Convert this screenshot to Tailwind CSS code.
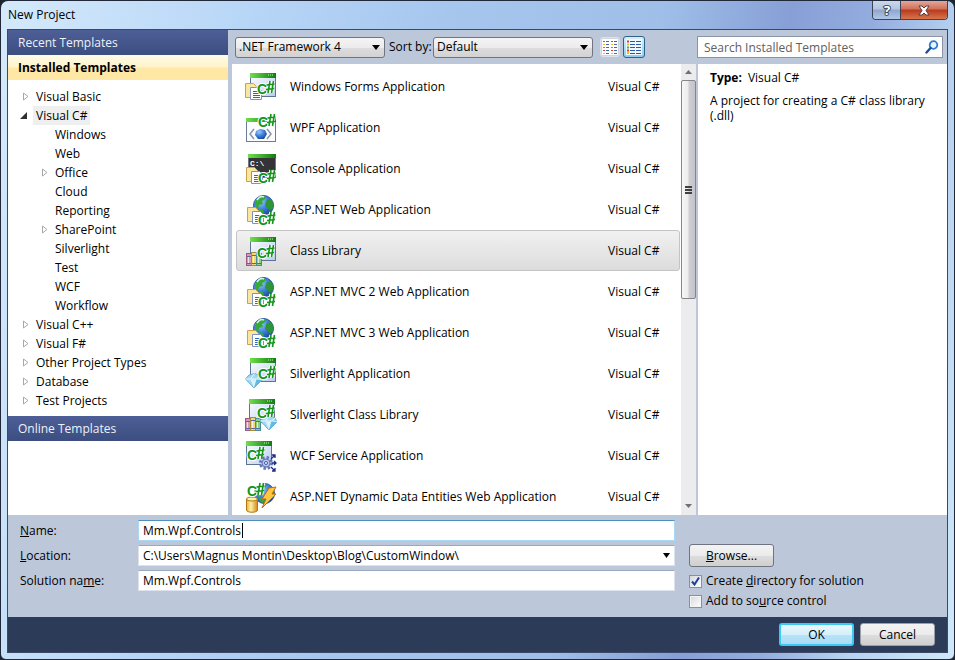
<!DOCTYPE html>
<html lang="en">
  <head>
    <meta charset="UTF-8" />
    <meta name="viewport" content="width=device-width, initial-scale=1.0" />
    <title>New Project</title>
    <script src="https://cdn.jsdelivr.net/npm/@tailwindcss/browser@4"></script>
  </head>
  <body class="h-screen overflow-hidden bg-[#1c2430] font-['Open_Sans',sans-serif] text-[12px] leading-4 text-black">
    <!-- Shared icon parts -->
    <svg class="absolute h-0 w-0" xmlns="http://www.w3.org/2000/svg">
      <defs>
        <linearGradient id="pane" x1="0" y1="0" x2="1" y2="1">
          <stop offset="0" stop-color="#ffffff" />
          <stop offset="1" stop-color="#b9cdf0" />
        </linearGradient>
        <linearGradient id="bar" x1="0" y1="0" x2="1" y2="0">
          <stop offset="0" stop-color="#6fe04a" />
          <stop offset="1" stop-color="#117a12" />
        </linearGradient>
        <radialGradient id="sea" cx="0.35" cy="0.3" r="0.8">
          <stop offset="0" stop-color="#9cc8ff" />
          <stop offset="0.5" stop-color="#3b7fd6" />
          <stop offset="1" stop-color="#143f8c" />
        </radialGradient>
        <linearGradient id="gold" x1="0" y1="0" x2="1" y2="0">
          <stop offset="0" stop-color="#f0b030" />
          <stop offset="0.4" stop-color="#fff0a8" />
          <stop offset="1" stop-color="#d08a10" />
        </linearGradient>
        <g id="window">
          <rect x="0.5" y="0.5" width="25" height="23" fill="url(#pane)" stroke="#5c7396" />
          <rect x="0" y="0" width="26" height="5" fill="url(#bar)" />
          <path d="M18 2h1M20 2h1M22 2h1" stroke="#c8f8b0" />
        </g>
        <g id="docs">
          <path d="M0.5 0.5h8l3 3v11h-11z" fill="#fbe6a0" stroke="#c9a24a" />
          <path d="M5.5 4.5h8l3 3v9h-11z" fill="#ffffff" stroke="#7d93c4" />
          <path d="M8 8.500h5M8 10.500h7M8 12.500h7M8 14.500h7" stroke="#2f62c0" />
        </g>
        <g id="sharp">
          <text x="0" y="12" font-family="Liberation Sans" font-size="14" font-weight="bold" fill="#15941a" stroke="#ffffff" stroke-width="2" paint-order="stroke">C</text>
          <path d="M11 11l2-12M14.500 11l2-12M9.500 3l8-1M9 7.500l8-1" stroke="#ffffff" stroke-width="3.500" fill="none" />
          <path d="M11 11l2-12M14.500 11l2-12M9.500 3l8-1M9 7.500l8-1" stroke="#15941a" stroke-width="1.600" fill="none" />
        </g>
        <g id="globe">
          <circle cx="10.500" cy="10.500" r="10" fill="url(#sea)" stroke="#24539c" />
          <path d="M3 5C6 1 10 0 13 2l-2 3-2 1 1 3-4 1-1 4C2 12 1 9 3 5z" fill="#36a83c" />
          <path d="M14 5l4-1c2 3 3 6 2 9l-3 3-2-3-3-2 1-4z" fill="#2c9535" />
          <path d="M6 14l4 1 1 4-3 1-3-3z" fill="#36a83c" />
          <path d="M4 5c2-3 5-4 7-3" stroke="#d8f4e0" stroke-width="1.500" fill="none" />
        </g>
        <g id="books">
          <rect x="0.500" y="1.500" width="5" height="12" fill="#d49ab4" stroke="#9c5a80" />
          <rect x="5.500" y="0.500" width="5" height="13" fill="#f0d878" stroke="#a88a38" />
          <rect x="10.500" y="1.500" width="5" height="12" fill="#8fcf80" stroke="#4a8c98" />
          <path d="M1 4.500h4M1 11.500h4M6 3.500h4M6 11.500h4M11 4.500h4M11 11.500h4" stroke="#5868a0" />
          <path d="M2.500 5v6M7.500 4v7M12.500 5v6" stroke="#ffffff" stroke-opacity="0.700" />
        </g>
        <g id="gem">
          <path d="M0.500 6L4 2l6-1.500L15 3l2 4-8 8z" fill="#9fd9f3" stroke="#5fb0da" />
          <path d="M0.500 6l5 0 4-5.500M5.500 6l6 0L17 7M11.500 6L15 3" stroke="#eefaff" fill="none" />
          <path d="M5.500 6.500L9 15l2.500-8.500z" fill="#d9f3fd" />
          <path d="M11.500 6.500L17 7l-8 8z" fill="#62b9e6" />
        </g>
      </defs>
    </svg>

    <div class="flex h-full flex-col rounded-t-lg rounded-b-md border border-[#20283a] bg-[linear-gradient(100deg,#d4e9fb_0%,#b9d7f7_22%,#a6c6ee_42%,#9fbfe9_62%,#879fd6_74%,#94addf_82%,#b7d2f0_90%,#cfe8fb_100%)] px-[6px] pb-[6px]">
      <!-- Title bar -->
      <header class="flex h-[28px] shrink-0 items-start justify-between">
        <h1 class="pt-[6px] pl-px">New Project</h1>
        <div class="flex h-[19px] overflow-hidden rounded-b-[4px] border border-t-0 border-[#3d4457]">
          <button aria-label="Help" class="flex w-[28px] items-center justify-center border-r border-[#3d4457] bg-[linear-gradient(#cbd8ec_0%,#b4c5e0_45%,#8fa5cc_50%,#b2c8e8_100%)]">
            <svg width="14" height="18" viewBox="0 0 14 18"><text x="7" y="14" text-anchor="middle" font-family="Open Sans" font-size="13" font-weight="bold" fill="#ffffff" stroke="#474d60" stroke-width="2" paint-order="stroke">?</text></svg>
          </button>
          <button aria-label="Close" class="flex w-[46px] items-center justify-center bg-[linear-gradient(#e5a698_0%,#d0705a_45%,#b8391f_50%,#d8754a_100%)]">
            <svg width="14" height="11" viewBox="0 0 14 11"><path d="M2 1h3l2 2 2-2h3L9 5.500 12 10H9L7 8l-2 2H2l3-4.500z" fill="#ffffff" stroke="#5b3a44" /></svg>
          </button>
        </div>
      </header>

      <main class="flex min-h-0 flex-1 flex-col border border-[#3b4866] bg-[#bcc7d9]">
        <div class="flex min-h-0 flex-1">
          <!-- Template categories -->
          <nav class="flex w-[220px] shrink-0 flex-col bg-white">
            <h2 class="bg-[linear-gradient(#4d5f96,#3c4d80)] pt-[5px] pb-1 pl-[10px] text-[#eef2f8]">Recent Templates</h2>
            <h2 class="bg-[linear-gradient(#fffbe8_0%,#fff3cb_48%,#ffe8a6_52%,#ffe8a6_100%)] pt-[5px] pb-1 pl-[10px] text-[12px] font-bold">Installed Templates</h2>
            <ul class="flex-1 pt-[7px] leading-[19px]">
              <li class="flex items-center pl-[15px]"><svg class="mr-[4px]" width="6" height="9" viewBox="0 0 6 9"><path d="M.5 1v7L5 4.500z" fill="#fff" stroke="#a8a8a8" /></svg><a href="#" class="px-[3px]">Visual Basic</a></li>
              <li>
                <div class="flex items-center pl-[12px]"><svg class="mr-[3px]" width="7" height="7" viewBox="0 0 7 7"><path d="M7 0v7H0z" fill="#303030" /></svg><a href="#" class="ml-[3px] bg-[#efefef] px-[3px]">Visual C#</a></div>
                <ul class="pl-[34px]">
                  <li class="pl-[13px]"><a href="#">Windows</a></li>
                  <li class="pl-[13px]"><a href="#">Web</a></li>
                  <li class="flex items-center"><svg class="mr-[7px]" width="6" height="9" viewBox="0 0 6 9"><path d="M.5 1v7L5 4.500z" fill="#fff" stroke="#a8a8a8" /></svg><a href="#">Office</a></li>
                  <li class="pl-[13px]"><a href="#">Cloud</a></li>
                  <li class="pl-[13px]"><a href="#">Reporting</a></li>
                  <li class="flex items-center"><svg class="mr-[7px]" width="6" height="9" viewBox="0 0 6 9"><path d="M.5 1v7L5 4.500z" fill="#fff" stroke="#a8a8a8" /></svg><a href="#">SharePoint</a></li>
                  <li class="pl-[13px]"><a href="#">Silverlight</a></li>
                  <li class="pl-[13px]"><a href="#">Test</a></li>
                  <li class="pl-[13px]"><a href="#">WCF</a></li>
                  <li class="pl-[13px]"><a href="#">Workflow</a></li>
                </ul>
              </li>
              <li class="flex items-center pl-[15px]"><svg class="mr-[4px]" width="6" height="9" viewBox="0 0 6 9"><path d="M.5 1v7L5 4.500z" fill="#fff" stroke="#a8a8a8" /></svg><a href="#" class="px-[3px]">Visual C++</a></li>
              <li class="flex items-center pl-[15px]"><svg class="mr-[4px]" width="6" height="9" viewBox="0 0 6 9"><path d="M.5 1v7L5 4.500z" fill="#fff" stroke="#a8a8a8" /></svg><a href="#" class="px-[3px]">Visual F#</a></li>
              <li class="flex items-center pl-[15px]"><svg class="mr-[4px]" width="6" height="9" viewBox="0 0 6 9"><path d="M.5 1v7L5 4.500z" fill="#fff" stroke="#a8a8a8" /></svg><a href="#" class="px-[3px]">Other Project Types</a></li>
              <li class="flex items-center pl-[15px]"><svg class="mr-[4px]" width="6" height="9" viewBox="0 0 6 9"><path d="M.5 1v7L5 4.500z" fill="#fff" stroke="#a8a8a8" /></svg><a href="#" class="px-[3px]">Database</a></li>
              <li class="flex items-center pl-[15px]"><svg class="mr-[4px]" width="6" height="9" viewBox="0 0 6 9"><path d="M.5 1v7L5 4.500z" fill="#fff" stroke="#a8a8a8" /></svg><a href="#" class="px-[3px]">Test Projects</a></li>
            </ul>
            <h2 class="mb-[74px] bg-[linear-gradient(#4d5f96,#3c4d80)] pt-[5px] pb-1 pl-[10px] text-[#eef2f8]">Online Templates</h2>
          </nav>

          <div class="flex min-w-0 flex-1 flex-col pl-1">
            <!-- Toolbar -->
            <div class="flex h-[34px] shrink-0 items-center pr-1 pl-[3px]">
              <div class="relative">
                <select aria-label="Framework" class="h-[21px] w-[150px] appearance-none rounded-[3px] border border-[#6f7480] bg-[linear-gradient(#f4f4f4_0%,#ececec_50%,#dddddd_51%,#d2d2d2_100%)] pl-[3px]"><option>.NET Framework 4</option></select>
                <svg class="pointer-events-none absolute top-[8px] right-[5px]" width="8" height="5" viewBox="0 0 8 5"><path d="M0 0h8L4 5z" /></svg>
              </div>
              <label for="sort" class="w-[48px] pl-1 whitespace-nowrap">Sort by:</label>
              <div class="relative">
                <select id="sort" class="h-[21px] w-[160px] appearance-none rounded-[3px] border border-[#6f7480] bg-[linear-gradient(#f4f4f4_0%,#ececec_50%,#dddddd_51%,#d2d2d2_100%)] pl-[3px]"><option>Default</option></select>
                <svg class="pointer-events-none absolute top-[8px] right-[5px]" width="8" height="5" viewBox="0 0 8 5"><path d="M0 0h8L4 5z" /></svg>
              </div>
              <button aria-label="Small icons" class="ml-[7px] flex h-[20px] w-[20px] items-center justify-center rounded-[3px] border border-[#dde3ec] bg-[#cdd5e2]">
                <svg width="16" height="16" viewBox="0 0 16 16"><path d="M0 0h16v16H0z" fill="#fff" /><path d="M1 2.500h2M9 2.500h2M1 11.500h2M9 11.500h2" stroke="#e03c28" /><path d="M1 5.500h2M9 5.500h2M1 14.500h2M9 14.500h2" stroke="#e8c020" /><path d="M1 8.500h2M9 8.500h2" stroke="#50b040" /><path d="M4 2.500h3M4 5.500h3M4 8.500h3M4 11.500h3M4 14.500h3M12 2.500h3M12 5.500h3M12 8.500h3M12 11.500h3M12 14.500h3" stroke="#4468b0" /></svg>
              </button>
              <button aria-label="Medium icons" class="ml-[3px] flex h-[22px] w-[22px] items-center justify-center rounded-[3px] border border-[#2c628b] bg-[linear-gradient(#d8effb,#8fcbee)]">
                <svg width="16" height="16" viewBox="0 0 16 16"><path d="M0 0h16v16H0z" fill="#eef8ff" /><path d="M1 2.500h2M1 11.500h2" stroke="#e03c28" stroke-width="2" /><path d="M1 5.500h2M1 14h2" stroke="#e8c020" stroke-width="2" /><path d="M1 8.500h2" stroke="#50b040" stroke-width="2" /><path d="M4 2.500h5M4 5.500h5M4 8.500h5M4 11.500h5M4 14.500h5M10 2.500h5M10 5.500h5M10 8.500h5M10 11.500h5M10 14.500h5" stroke="#2f56a8" /></svg>
              </button>
              <div class="relative ml-auto">
                <input type="text" aria-label="Search Installed Templates" placeholder="Search Installed Templates" class="h-[22px] w-[246px] border border-[#8a94a8] bg-white pl-[6px] placeholder:text-[#606060]" />
                <svg class="absolute top-1 right-1" width="14" height="14" viewBox="0 0 14 14"><circle cx="8.500" cy="5" r="3.800" fill="#eaf4ff" stroke="#2f7bd0" stroke-width="1.800" /><path d="M5.500 8L1.500 12.500" stroke="#1d4fa0" stroke-width="2.400" stroke-linecap="round" /></svg>
              </div>
            </div>

            <div class="flex min-h-0 flex-1">
              <!-- Template list -->
              <ul class="min-w-0 flex-1 overflow-hidden bg-white px-1 pt-[2px] pr-px">
                <li class="flex h-[41px] items-center pl-[9px]">
                  <svg class="shrink-0" width="32" height="32" viewBox="0 0 32 32"><use href="#window" x="5" y="2" /><use href="#docs" x="0" y="12" /><use href="#sharp" x="12" y="11" /></svg>
                  <span class="ml-[13px] flex-1">Windows Forms Application</span><span class="w-[72px]">Visual C#</span>
                </li>
                <li class="flex h-[41px] items-center pl-[9px]">
                  <svg class="shrink-0" width="32" height="32" viewBox="0 0 32 32"><rect x="1.500" y="6.500" width="29" height="23" fill="#fafcff" stroke="#6c7c94" /><rect x="1" y="6" width="30" height="4" fill="url(#bar)" /><path d="M9 17l-4 5 4 5M22 17l4 5-4 5" stroke="#8a94a4" stroke-width="1.500" fill="none" /><path d="M11 19l4-2 5 1 2 4-3 5-6 0-3-4z" fill="url(#sea)" /><use href="#sharp" x="13" y="3" /></svg>
                  <span class="ml-[13px] flex-1">WPF Application</span><span class="w-[72px]">Visual C#</span>
                </li>
                <li class="flex h-[41px] items-center pl-[9px]">
                  <svg class="shrink-0" width="32" height="32" viewBox="0 0 32 32"><rect x="3.500" y="1.500" width="27" height="23" fill="#333338" stroke="#77777c" /><rect x="3" y="1" width="28" height="4" fill="url(#bar)" /><text x="5" y="13" font-family="Liberation Mono" font-size="8" font-weight="bold" fill="#ffffff">C:\</text><use href="#docs" x="1" y="14" /><use href="#sharp" x="13" y="18" /></svg>
                  <span class="ml-[13px] flex-1">Console Application</span><span class="w-[72px]">Visual C#</span>
                </li>
                <li class="flex h-[41px] items-center pl-[9px]">
                  <svg class="shrink-0" width="32" height="32" viewBox="0 0 32 32"><use href="#globe" x="8" y="1" /><use href="#docs" x="2" y="13" /><use href="#sharp" x="13" y="19" /></svg>
                  <span class="ml-[13px] flex-1">ASP.NET Web Application</span><span class="w-[72px]">Visual C#</span>
                </li>
                <li aria-selected="true" class="flex h-[41px] items-center rounded-[3px] border border-[#c4c4c4] bg-[linear-gradient(#f1f1f1,#dcdcdc)] pl-2">
                  <svg class="shrink-0" width="32" height="32" viewBox="0 0 32 32"><use href="#window" x="5" y="2" /><use href="#books" x="1" y="17" /><use href="#sharp" x="12" y="11" /></svg>
                  <span class="ml-[13px] flex-1">Class Library</span><span class="w-[71px]">Visual C#</span>
                </li>
                <li class="flex h-[41px] items-center pl-[9px]">
                  <svg class="shrink-0" width="32" height="32" viewBox="0 0 32 32"><use href="#globe" x="8" y="1" /><use href="#docs" x="2" y="13" /><use href="#sharp" x="13" y="19" /></svg>
                  <span class="ml-[13px] flex-1">ASP.NET MVC 2 Web Application</span><span class="w-[72px]">Visual C#</span>
                </li>
                <li class="flex h-[41px] items-center pl-[9px]">
                  <svg class="shrink-0" width="32" height="32" viewBox="0 0 32 32"><use href="#globe" x="8" y="1" /><use href="#docs" x="2" y="13" /><use href="#sharp" x="13" y="19" /></svg>
                  <span class="ml-[13px] flex-1">ASP.NET MVC 3 Web Application</span><span class="w-[72px]">Visual C#</span>
                </li>
                <li class="flex h-[41px] items-center pl-[9px]">
                  <svg class="shrink-0" width="32" height="32" viewBox="0 0 32 32"><use href="#window" x="5" y="0" /><use href="#gem" x="0" y="15" /><use href="#sharp" x="13" y="9" /></svg>
                  <span class="ml-[13px] flex-1">Silverlight Application</span><span class="w-[72px]">Visual C#</span>
                </li>
                <li class="flex h-[41px] items-center pl-[9px]">
                  <svg class="shrink-0" width="32" height="32" viewBox="0 0 32 32"><use href="#window" x="4" y="0" /><use href="#books" x="0" y="18" /><use href="#gem" x="15" y="16" /><use href="#sharp" x="12" y="7" /></svg>
                  <span class="ml-[13px] flex-1">Silverlight Class Library</span><span class="w-[72px]">Visual C#</span>
                </li>
                <li class="flex h-[41px] items-center pl-[9px]">
                  <svg class="shrink-0" width="32" height="32" viewBox="0 0 32 32"><use href="#window" x="1" y="1" /><use href="#sharp" x="2" y="8" /><circle cx="21" cy="23" r="5.500" fill="#c4cdee" stroke="#6475b8" stroke-width="3" stroke-dasharray="2.300 2" /><circle cx="21" cy="23" r="4" fill="#b8c4ec" stroke="#6475b8" /><circle cx="21" cy="23" r="1.500" fill="#fff" stroke="#44569c" /><path d="M26 19l4-4M27 15h3v3M27 23h4M29 21l2 2-2 2M26 27l4 4M27 31h3v-3" stroke="#1c2c80" stroke-width="1.300" fill="none" /></svg>
                  <span class="ml-[13px] flex-1">WCF Service Application</span><span class="w-[72px]">Visual C#</span>
                </li>
                <li class="flex h-[41px] items-center pl-[9px]">
                  <svg class="shrink-0" width="32" height="32" viewBox="0 0 32 32"><use href="#globe" x="9" y="2" /><path d="M24 7l7-1-4 7 4 0-14 14 4-9-4 0z" fill="#ffc640" stroke="#c06a10" /><path d="M1.500 18v11c0 3 11 3 11 0V18" fill="url(#gold)" stroke="#b07810" /><ellipse cx="7" cy="18" rx="5.500" ry="2" fill="#fff0a8" stroke="#b07810" /><use href="#sharp" x="2" y="3" /></svg>
                  <span class="ml-[13px] flex-1 whitespace-nowrap">ASP.NET Dynamic Data Entities Web Application</span><span class="w-[72px]">Visual C#</span>
                </li>
              </ul>

              <!-- Scrollbar -->
              <div class="flex w-[15px] shrink-0 flex-col items-center bg-[#ececee]">
                <svg class="my-[6px] shrink-0" width="7" height="4" viewBox="0 0 7 4"><path d="M3.500 0L7 4H0z" fill="#707070" /></svg>
                <div class="flex h-[219px] w-full shrink-0 flex-col items-center justify-center gap-px rounded-[2px] border border-[#85858a] bg-[linear-gradient(90deg,#f7f7f7_0%,#ececec_45%,#cfcfd3_55%,#c2c2c8_100%)]">
                  <span class="h-[2px] w-[7px] bg-[#404040]"></span>
                  <span class="h-[2px] w-[7px] bg-[#404040]"></span>
                  <span class="h-[2px] w-[7px] bg-[#404040]"></span>
                </div>
                <svg class="mt-auto mb-[7px] shrink-0" width="7" height="4" viewBox="0 0 7 4"><path d="M0 0h7L3.500 4z" fill="#707070" /></svg>
              </div>

              <!-- Description -->
              <section class="ml-[2px] w-[249px] shrink-0 bg-white px-3 pt-[6px] leading-[15px]">
                <p class="mb-2"><b class="mr-[6px] font-bold">Type:</b>Visual C#</p>
                <p>A project for creating a C# class library (.dll)</p>
              </section>
            </div>
          </div>
        </div>

        <!-- Project settings -->
        <form class="flex h-[102px] shrink-0 pt-[5px]">
          <div class="grid min-w-0 flex-1 auto-rows-[21px] grid-cols-[118px_1fr] items-center gap-y-1 pl-3">
            <label for="name"><u>N</u>ame:</label>
            <div class="relative">
              <input id="name" type="text" value="Mm.Wpf.Controls" class="block h-[21px] w-full border border-[#a8d8f4] border-t-[#4f8fc0] bg-white pl-1" />
              <span class="absolute top-[3px] left-[104px] h-[15px] w-px bg-black"></span>
            </div>
            <label for="location"><u>L</u>ocation:</label>
            <div class="relative">
              <select id="location" class="block h-[21px] w-full appearance-none border border-[#dde3ec] border-t-[#9aa8c0] bg-white pl-1"><option>C:\Users\Magnus Montin\Desktop\Blog\CustomWindow\</option></select>
              <svg class="pointer-events-none absolute top-[8px] right-[5px]" width="7" height="5" viewBox="0 0 7 5"><path d="M0 0h7L3.500 5z" /></svg>
            </div>
            <label for="solution">Solution na<u>m</u>e:</label>
            <input id="solution" type="text" value="Mm.Wpf.Controls" class="block h-[21px] w-full border border-[#dde3ec] border-t-[#9aa8c0] bg-white pl-1" />
          </div>
          <div class="ml-[14px] flex w-[258px] shrink-0 flex-col items-start pt-6">
            <button type="button" class="mb-1 h-[23px] w-[85px] shrink-0 rounded-[3px] border border-[#6f7480] bg-[linear-gradient(#f3f3f3_0%,#ebebeb_50%,#dddddd_51%,#cfcfcf_100%)]"><u>B</u>rowse...</button>
            <label class="flex h-5 items-center gap-1">
              <span class="relative flex"><input type="checkbox" checked class="peer h-[13px] w-[13px] appearance-none border border-[#8e8f8f] bg-[linear-gradient(135deg,#d3d8de,#ffffff)]" />
                <svg class="pointer-events-none absolute top-[2px] left-[2px] hidden peer-checked:block" width="9" height="9" viewBox="0 0 9 9"><path d="M1 4.500l2.500 3L8 .5" fill="none" stroke="#213f94" stroke-width="2" /></svg></span>
              <span>Create <u>d</u>irectory for solution</span>
            </label>
            <label class="flex h-5 items-center gap-1">
              <input type="checkbox" class="h-[13px] w-[13px] appearance-none border border-[#8e8f8f] bg-[linear-gradient(135deg,#d3d8de,#ffffff)] outline-1 -outline-offset-2 outline-[#f4f4f4]" />
              <span>Add to so<u>u</u>rce control</span>
            </label>
          </div>
        </form>

        <footer class="flex h-[35px] shrink-0 justify-end gap-[6px] bg-[#2b3b58] pt-[6px] pr-3">
          <button class="h-[23px] w-[75px] rounded-[3px] border-2 border-[#3cc8f4] bg-[linear-gradient(#eaf7fd_0%,#d5effb_50%,#b9e3f7_51%,#a8dcf5_100%)]">OK</button>
          <button class="h-[23px] w-[75px] rounded-[3px] border border-[#9aa0aa] bg-[linear-gradient(#f3f3f3_0%,#ebebeb_50%,#dddddd_51%,#cfcfcf_100%)]">Cancel</button>
        </footer>
      </main>
    </div>
  </body>
</html>
